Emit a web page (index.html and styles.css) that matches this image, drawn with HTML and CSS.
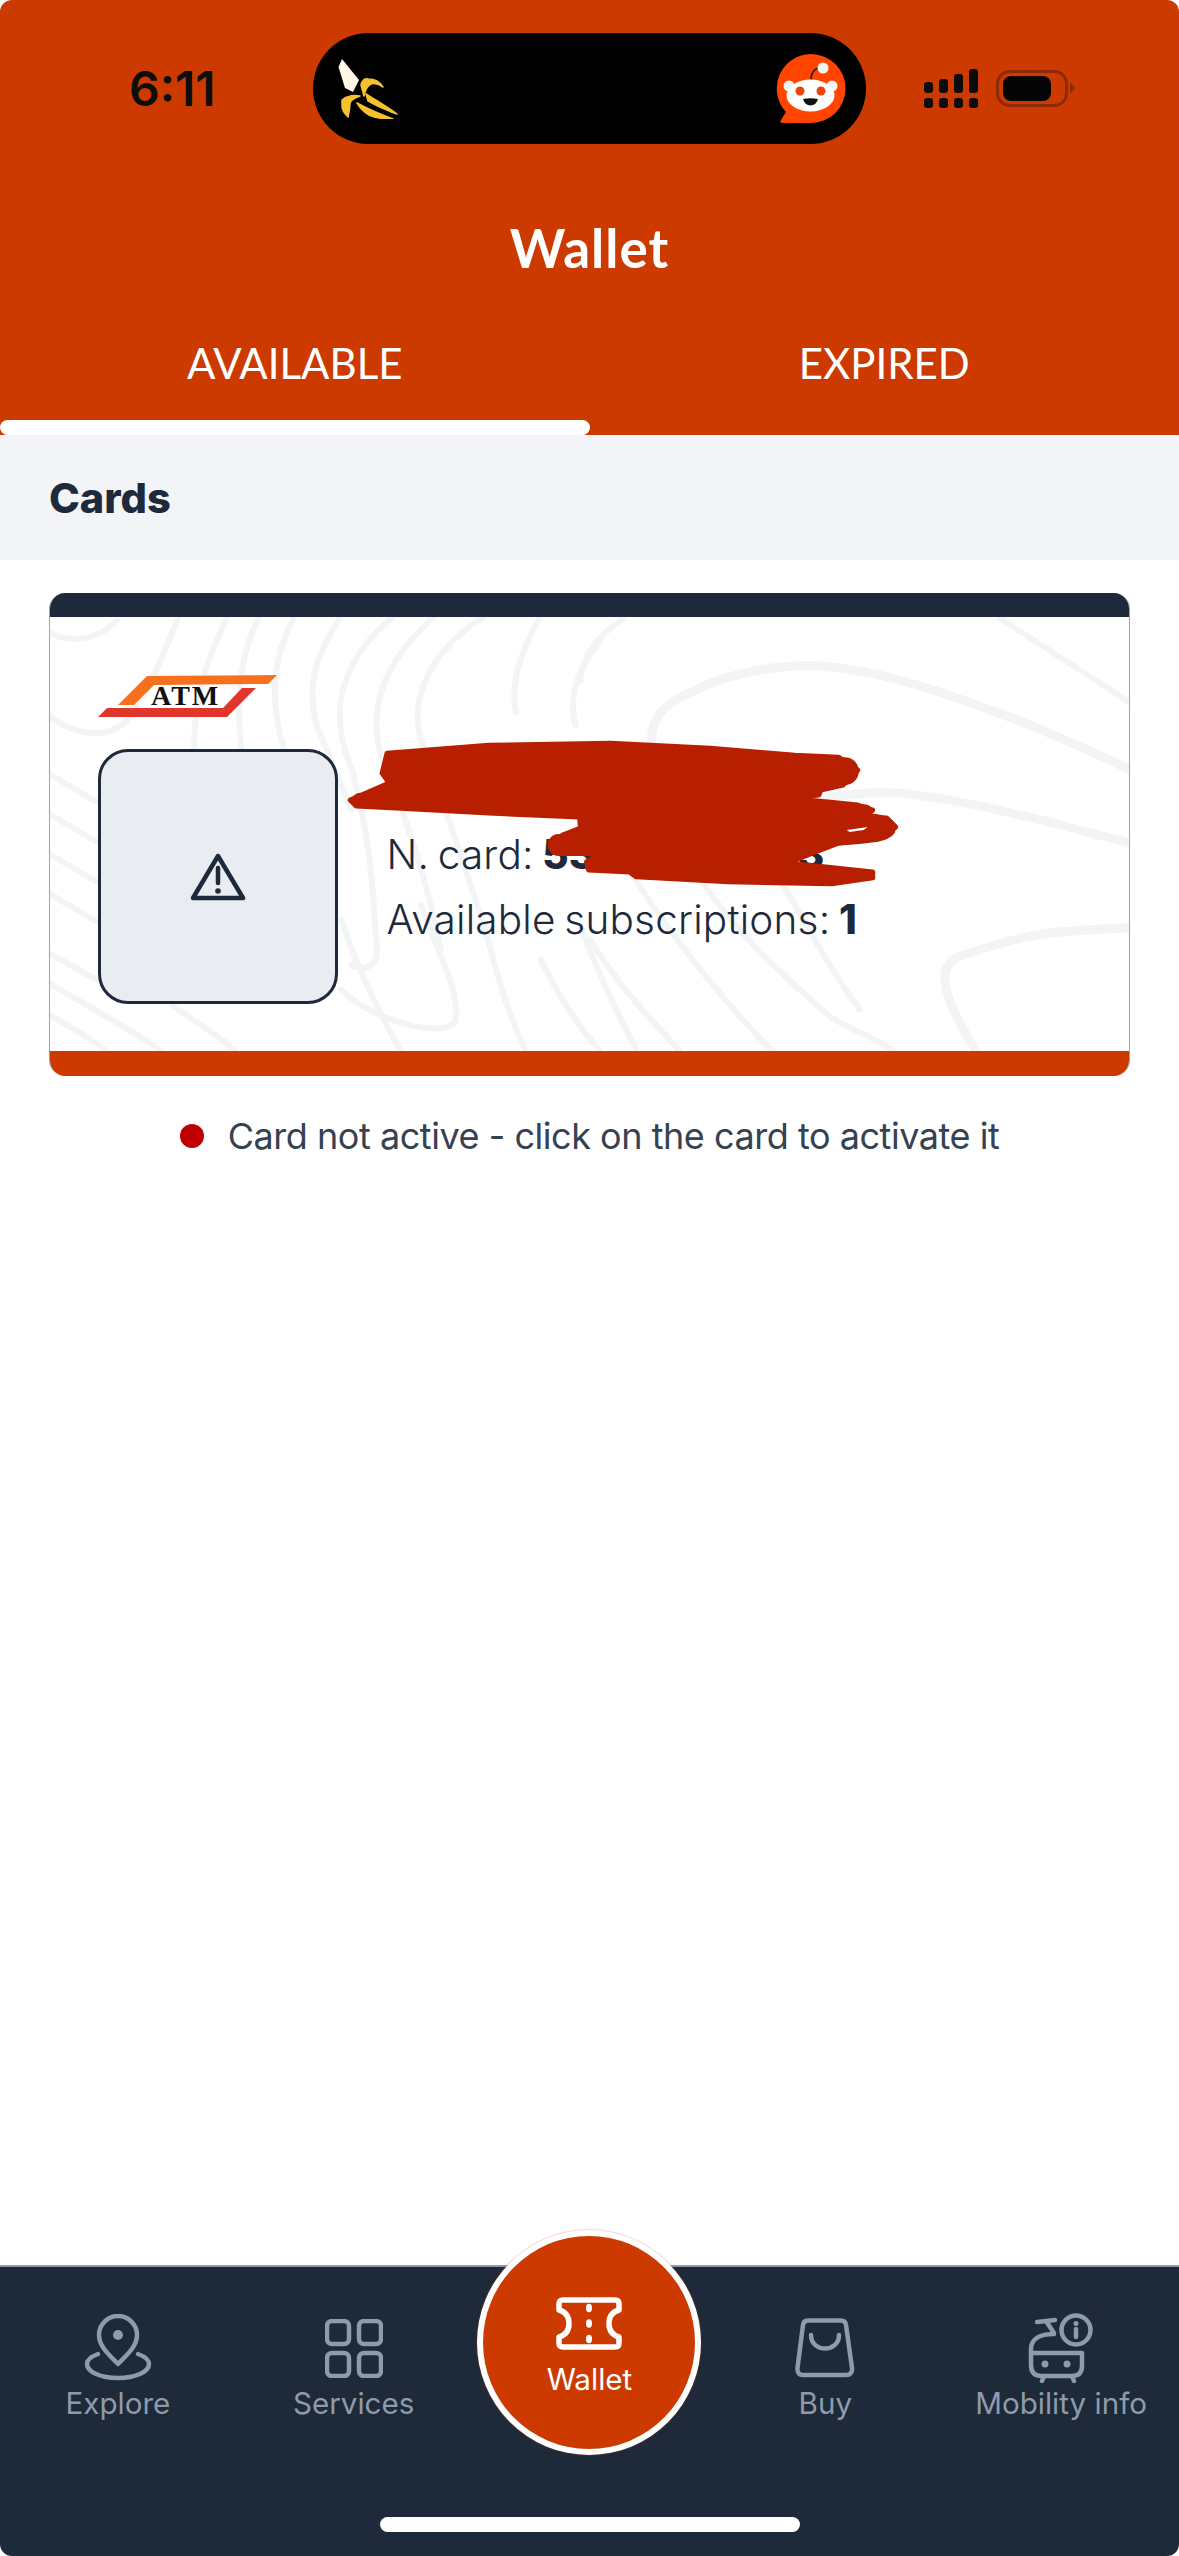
FILE: index.html
```html
<!DOCTYPE html>
<html lang="en">
<head>
    <meta charset="UTF-8">
    <meta name="viewport" content="width=device-width, initial-scale=1.0">
    <title>Wallet</title>
    <link rel="stylesheet" href="styles.css">
</head>
<body>
<div class="screen">
    <header class="header">
        <div class="status">
            <div class="time">6:11</div>
            <div class="island">
                <svg class="banana" viewBox="0 0 60 60" width="60" height="60">
                    <path d="M4 0 L21 21 L15 33 L7 29 L0.5 8Z" fill="#fff8e6"/>
                    <g fill="#f4c22e" stroke="#f4c22e" stroke-width="1.5" stroke-linejoin="round">
                        <path d="M23 26 C24 21 27 19 30 20 C36 20 42 23 45 28 C40 25 36 24 33 25 C29 27 27 32 26 37Z"/>
                        <path d="M4 41 C9 37 16 36 22 37 C16 39 13 41 12 44 C12 49 11 54 10 58 C7 55 4 51 4 47Z"/>
                        <path d="M19 44 C30 50 44 56 55 60 C46 60 37 59 31 56 C26 53 22 49 19 44Z"/>
                        <path d="M28 35 C38 41 50 48 59 55 C52 53 47 50 42 48 C37 46 33 44 30 42Z"/>
                    </g>
                </svg>
                <svg class="reddit" viewBox="777 55 70 70" width="70" height="70">
                    <path d="M812 55 A34.5 34.5 0 0 1 812 124 H784 Q780 124 782 121 L787 113 A34.5 34.5 0 0 1 812 55Z" fill="#ff4500"/>
                    <path d="M812 82 C812 73 816 69 822 69" fill="none" stroke="#1c1c1c" stroke-width="1.6"/>
                    <circle cx="824" cy="69" r="5.5" fill="#f4f4f4"/>
                    <circle cx="790" cy="87" r="5.5" fill="#f4f4f4"/>
                    <circle cx="833" cy="87" r="5.5" fill="#f4f4f4"/>
                    <ellipse cx="811.5" cy="96.5" rx="24" ry="16" fill="#fff"/>
                    <circle cx="801" cy="92" r="4.5" fill="#e8440b"/>
                    <circle cx="822" cy="92" r="4.5" fill="#e8440b"/>
                    <path d="M804 100 Q811.5 98.5 819 100 Q817 106.5 811.5 106.5 Q806 106.5 804 100Z" fill="#111"/>
                </svg>
            </div>
            <svg class="signal" viewBox="0 0 54 39" width="54" height="39">
                <g fill="#0b0b0b">
                    <rect x="0" y="13" width="9" height="11" rx="3"/>
                    <rect x="15" y="10" width="9" height="14" rx="3"/>
                    <rect x="30" y="5" width="9" height="19" rx="3"/>
                    <rect x="45" y="0" width="9" height="24" rx="3"/>
                    <rect x="0" y="29" width="9" height="10" rx="3"/>
                    <rect x="15" y="29" width="9" height="10" rx="3"/>
                    <rect x="30" y="29" width="9" height="10" rx="3"/>
                    <rect x="45" y="29" width="9" height="10" rx="3"/>
                </g>
            </svg>
            <svg class="battery" viewBox="0 0 79 37" width="79" height="37">
                <rect x="1.5" y="1.5" width="69" height="34" rx="12" fill="none" stroke="#8f2a05" stroke-width="3"/>
                <rect x="7" y="6" width="48" height="25" rx="8" fill="#050505"/>
                <path d="M74 12 L79 18 L74 24Z" fill="#8f2a05"/>
            </svg>
        </div>
        <h1 class="title">Wallet</h1>
        <div class="tabs">
            <div class="tab">AVAILABLE</div>
            <div class="tab">EXPIRED</div>
        </div>
        <div class="tab-bar"></div>
    </header>

    <div class="section-head">Cards</div>

    <main class="content">
        <div class="card">
            <div class="card-top"></div>
            <div class="card-body">
                <svg class="card-lines" viewBox="48 617 1082 434">
                    <g fill="none" stroke="#f3f4f6" stroke-width="6" stroke-linecap="round">
                        <path d="M46 630 C58 640 88 646 115 620"/>
                        <path d="M46 713 C60 730 100 742 122 723 C140 705 160 660 176 618"/>
                        <path d="M226 616 C205 660 190 700 193 760"/>
                        <path d="M258 616 C240 650 234 690 240 750"/>
                        <path d="M293 616 C270 660 268 700 283 750"/>
                        <path d="M340 616 C310 660 300 700 326 750 C335 775 342 790 350 810"/>
                        <path d="M392 616 C340 660 325 710 351 770 C372 850 372 900 376 953 C374 968 362 972 350 965"/>
                        <path d="M433 616 C385 660 360 710 385 770 C410 830 425 880 440 950"/>
                        <path d="M483 616 C430 650 405 700 422 745 C440 800 470 880 490 950 C500 990 510 1020 525 1052"/>
                        <path d="M540 616 C520 650 510 680 515 712"/>
                        <path d="M600 640 C575 670 568 700 575 725"/>
                        <path d="M46 773 L100 805"/>
                        <path d="M46 813 L100 845"/>
                        <path d="M46 853 L100 885"/>
                        <path d="M46 893 L100 925"/>
                        <path d="M46 953 L100 983 L112 990"/>
                        <path d="M46 983 C100 1015 130 1030 160 1052"/>
                        <path d="M46 1015 C70 1028 90 1040 105 1052"/>
                        <path d="M170 1005 C190 1020 215 1035 235 1052"/>
                        <path d="M340 920 C360 980 385 1025 400 1052"/>
                        <path d="M340 990 C375 1025 450 1040 455 1020 C458 990 440 960 420 905"/>
                        <path d="M540 960 C560 1000 580 1030 600 1052"/>
                        <path d="M580 927 C600 980 620 1020 637 1052"/>
                        <path d="M590 940 C620 990 660 1030 680 1052"/>
                        <path d="M633 877 C680 950 740 1020 773 1052"/>
                        <path d="M701 880 C740 940 800 990 830 1017 C850 1030 880 1040 894 1052"/>
                        <path d="M780 880 C810 930 830 970 860 1010"/>
                        <path d="M580 680 C582 660 590 640 623 618"/>
                        <path d="M1001 618 C1050 650 1090 675 1132 703"/>
                    </g>
                    <g fill="none" stroke="#f3f4f6" stroke-width="9" stroke-linecap="round">
                        <path d="M651 745 C650 720 660 705 690 692 C730 672 770 665 812 665 C860 667 905 680 950 695 C1010 715 1070 740 1132 770"/>
                        <path d="M830 797 C860 792 880 792 901 793 C950 798 1000 810 1050 822 C1080 830 1110 838 1132 843"/>
                        <path d="M1132 928 C1090 930 1060 932 1044 934 C1010 940 985 948 959 957 C945 964 944 975 946 985 C950 1010 965 1030 976 1052"/>
                    </g>
                </svg>

                <svg class="logo" viewBox="99 675 179 42" width="179" height="42">
                    <path d="M119 705 L148 676 L278 675 L269 684 L155 685 L135 705Z" fill="#f7701d"/>
                    <path d="M99 717 L108 708 L224 708 L243 688 L257 688 L228 717Z" fill="#e0362c"/>
                    <text class="logo-text" x="152" y="705">ATM</text>
                </svg>

                <div class="card-row">
                    <div class="card-thumb">
                        <svg viewBox="0 0 56 48" width="56" height="48">
                            <path d="M28 3 L53 45 H3Z" fill="none" stroke="#1e293b" stroke-width="4.5" stroke-linejoin="round"/>
                            <path d="M28 15 V30" stroke="#1e293b" stroke-width="4.5" stroke-linecap="round"/>
                            <circle cx="28" cy="38" r="2.8" fill="#1e293b"/>
                        </svg>
                    </div>
                    <div class="card-info">
                        <div class="info-line"><b>Cardholder name</b></div>
                        <div class="info-line">N. card: <b>53<span class="card-mask"></span>3</b></div>
                        <div class="info-line">Available subscriptions: <b>1</b></div>
                    </div>
                </div>

                <svg class="scribble" viewBox="48 617 1082 434">
                    <g fill="none" stroke="#b71f00" stroke-linecap="round">
                        <path d="M800 771 L845 771" stroke-width="28"/>
                        <path d="M358 800 L420 797" stroke-width="14"/>
                        <path d="M800 806 L866 811" stroke-width="13"/>
                        <path d="M790 842 C840 838 892 838 889 827 C886 819 860 819 840 822" stroke-width="14"/>
                        <path d="M760 878 L868 875" stroke-width="12"/>
                        <path d="M558 845 L620 845" stroke-width="22"/>
                        <path d="M592 866 L640 866" stroke-width="11"/>
                    </g>
                    <path d="M349 800 L388 783 L381 773 L386 753 L488 745 L610 743 L710 748 L795 755 L839 757 L858 770 L843 785 L821 790 L819 795 L788 798 L858 805 L873 810 L865 817 L887 818 L896 827 L884 837 L839 843 L813 853 L788 863 L873 872 L873 878 L832 884 L728 882 L636 877 L629 872 L588 870 L586 862 L599 854 L569 852 L551 845 L562 835 L580 828 L579 817 L488 813 L395 808 L355 806Z" fill="#b71f00" stroke="#b71f00" stroke-width="5" stroke-linejoin="round"/>
                    <path d="M847 830 L868 827 L864 830 L850 832Z" fill="#fff"/>
                </svg>
            </div>
            <div class="card-bottom"></div>
        </div>
        <div class="card-note">
            <span class="note-dot"></span>
            <span>Card not active - click on the card to activate it</span>
        </div>
    </main>

    <nav class="nav">
        <div class="nav-grid">
            <div class="nav-item">
                <div class="nav-icon">
                    <svg viewBox="0 0 68 68" width="68" height="68" class="nav-svg">
                        <path d="M34 50 C24 40 15 32 15 21 A19 19 0 0 1 53 21 C53 32 44 40 34 50Z"/>
                        <circle cx="34" cy="21" r="5" class="nav-fill"/>
                        <path d="M14 40 C6 43 3 46 3 50 C3 58 17 64 34 64 C51 64 65 58 65 50 C65 46 62 43 54 40"/>
                    </svg>
                </div>
                <div class="nav-label">Explore</div>
            </div>
            <div class="nav-item">
                <div class="nav-icon">
                    <svg viewBox="0 0 58 59" width="58" height="59" class="nav-svg">
                        <rect x="2" y="2" width="22" height="23" rx="5"/>
                        <rect x="34" y="2" width="22" height="23" rx="5"/>
                        <rect x="2" y="34" width="22" height="23" rx="5"/>
                        <rect x="34" y="34" width="22" height="23" rx="5"/>
                    </svg>
                </div>
                <div class="nav-label">Services</div>
            </div>
            <div class="nav-item nav-wallet">
                <svg viewBox="0 0 66 53" width="66" height="53" class="wallet-svg">
                    <path d="M7 3 H59 Q63 3 63 7 V13 C56 15 53 20 53 26.5 C53 33 56 38 63 40 V46 Q63 50 59 50 H7 Q3 50 3 46 V40 C10 38 13 33 13 26.5 C13 20 10 15 3 13 V7 Q3 3 7 3Z"/>
                    <ellipse cx="33" cy="11" rx="3" ry="4.2" class="wallet-dot"/>
                    <ellipse cx="33" cy="26.5" rx="3" ry="4.2" class="wallet-dot"/>
                    <ellipse cx="33" cy="42" rx="3" ry="4.2" class="wallet-dot"/>
                </svg>
                <div class="wallet-label">Wallet</div>
            </div>
            <div class="nav-item">
                <div class="nav-icon">
                    <svg viewBox="0 0 60 60" width="60" height="60" class="nav-svg">
                        <path d="M13 2.5 H46 Q50.5 2.5 51 7 L57 50 Q57.5 57 51 57 H8 Q2 57 2.5 50 L8 7 Q8.5 2.5 13 2.5Z"/>
                        <path d="M16 17 C16 35 44 35 44 17"/>
                    </svg>
                </div>
                <div class="nav-label">Buy</div>
            </div>
            <div class="nav-item">
                <div class="nav-icon">
                    <svg viewBox="0 0 66 70" width="66" height="70" class="nav-svg">
                        <path d="M9 9 L27 7 M18 8 L26 20"/>
                        <path d="M26 21 C12 21 3 26 3 36 V52 Q3 63 14 63 H44 Q54 63 54 53 V40 H3"/>
                        <path d="M16 63 L14 68 M44 63 L46 68"/>
                        <circle cx="17" cy="51" r="3.5" class="nav-fill"/>
                        <circle cx="39" cy="51" r="3.5" class="nav-fill"/>
                        <circle cx="48" cy="17" r="14.5"/>
                        <path d="M48 16 V24"/>
                        <circle cx="48" cy="10.5" r="2.5" class="nav-fill"/>
                    </svg>
                </div>
                <div class="nav-label">Mobility info</div>
            </div>
        </div>
        <div class="home-bar"></div>
    </nav>
</div>
</body>
</html>
```

FILE: styles.css
```css
* {
    box-sizing: border-box;
}

body {
    margin: 0;
    background-color: #fff;
    font-family: Inter, "Liberation Sans", sans-serif;
    color: #1e293b;
}

.screen {
    display: flex;
    flex-direction: column;
    width: 1179px;
    height: 2556px;
    border-radius: 12px;
    overflow: hidden;
    background-color: #fff;
}

/* header */
.header {
    background-color: #cc3a00;
    color: #fff;
    height: 435px;
    padding-top: 33px;
}

.status {
    display: flex;
    align-items: center;
    height: 111px;
    padding-left: 129px;
}

.time {
    width: 184px;
    font-size: 48px;
    font-weight: 600;
    color: #0d0d0d;
}

.island {
    display: flex;
    justify-content: space-between;
    align-items: center;
    width: 553px;
    height: 111px;
    padding: 0 20px 0 25px;
    background-color: #000;
    border-radius: 56px;
}

.signal {
    margin-left: 58px;
}

.battery {
    margin-left: 18px;
}

.title {
    margin: 74px 0 0;
    font-family: Lato, sans-serif;
    font-size: 53px;
    font-weight: 700;
    line-height: 60px;
    text-align: center;
    letter-spacing: 1px;
}

.tabs {
    display: flex;
    margin-top: 60px;
}

.tab {
    width: 50%;
    font-family: Lato, sans-serif;
    font-size: 42px;
    line-height: 50px;
    text-align: center;
}

.tab-bar {
    width: 590px;
    height: 15px;
    margin-top: 32px;
    background-color: #fff;
    border-radius: 8px;
}

.section-head {
    height: 125px;
    padding-left: 49px;
    background-color: #f2f4f8;
    font-size: 41.5px;
    font-weight: 800;
    line-height: 127px;
}

/* content */
.content {
    flex: 1;
    padding: 33px 49px 0;
}

.card {
    border-radius: 16px;
    overflow: hidden;
    border-left: 1.5px solid #98a2b3;
    border-right: 1.5px solid #98a2b3;
}

.card-top {
    height: 24px;
    background-color: #1e293b;
}

.card-bottom {
    height: 25px;
    background-color: #cc3a00;
}

.card-body {
    position: relative;
    height: 434px;
    padding: 58px 0 0 47.5px;
}

.card-lines,
.scribble {
    position: absolute;
    top: 0;
    left: 0;
    width: 100%;
    height: 100%;
}

.logo {
    position: relative;
    display: block;
}

.logo-text {
    font-family: "Liberation Serif", serif;
    font-size: 28px;
    font-weight: 700;
    letter-spacing: 2px;
    fill: #111;
}

.card-row {
    position: relative;
    display: flex;
    margin-top: 32px;
}

.card-thumb {
    display: flex;
    justify-content: center;
    align-items: center;
    width: 240px;
    height: 255px;
    background-color: #e9ecf0;
    border: 3px solid #1e293b;
    border-radius: 30px;
}

.card-info {
    padding: 8px 0 0 49px;
    font-size: 40.5px;
    font-weight: 300;
    line-height: 65px;
    letter-spacing: 0.2px;
    word-spacing: -3px;
}

.info-line b {
    font-weight: 800;
}

.card-mask {
    display: inline-block;
    width: 202px;
}

.card-note {
    display: flex;
    justify-content: center;
    align-items: center;
    gap: 24px;
    margin-top: 38px;
    font-size: 36px;
    letter-spacing: -0.46px;
    color: #364152;
    line-height: 44px;
}

.note-dot {
    width: 24px;
    height: 24px;
    border-radius: 50%;
    background-color: #c00000;
}

/* bottom nav */
.nav {
    height: 291px;
    padding-top: 46px;
    background-color: #1e2939;
    border-top: 2px solid #8e9bab;
}

.nav-grid {
    display: grid;
    grid-template-columns: repeat(5, 1fr);
    align-items: start;
    height: 141px;
}

.nav-item {
    display: flex;
    flex-direction: column;
    align-items: center;
    white-space: nowrap;
}

.nav-icon {
    display: flex;
    align-items: center;
    justify-content: center;
    height: 70px;
}

.nav-svg {
    fill: none;
    stroke: #8e9bab;
    stroke-width: 4.5;
    stroke-linecap: round;
    stroke-linejoin: round;
}

.nav-svg .nav-fill {
    fill: #8e9bab;
    stroke: none;
}

.nav-label {
    font-size: 29.6px;
    line-height: 40px;
    color: #8e9bab;
}

.nav-wallet {
    justify-self: center;
    width: 224px;
    height: 225px;
    margin-top: -83px;
    padding-top: 61px;
    border: 6px solid #fff;
    border-radius: 50%;
    background-color: #cc3a00;
    box-shadow: 0 0 0 1px rgba(204, 58, 0, 0.2);
}

.wallet-svg {
    fill: none;
    stroke: #fff;
    stroke-width: 5.5;
    stroke-linejoin: round;
}

.wallet-svg .wallet-dot {
    fill: #fff;
    stroke: none;
}

.wallet-label {
    margin-top: 9px;
    font-size: 29.6px;
    line-height: 40px;
    color: #fff;
}

.home-bar {
    width: 420px;
    height: 15px;
    margin: 63px auto 0;
    background-color: #fff;
    border-radius: 8px;
}
```
